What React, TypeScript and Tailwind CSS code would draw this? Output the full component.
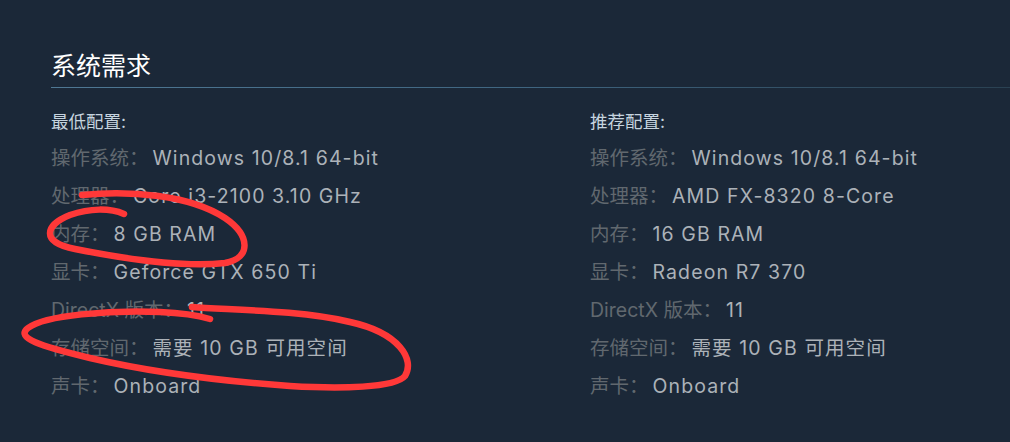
import React from 'react';

type Row = { label: string; value: string };

const minimum: Row[] = [
  { label: '操作系统：', value: 'Windows 10/8.1 64-bit' },
  { label: '处理器：', value: 'Core i3-2100 3.10 GHz' },
  { label: '内存：', value: '8 GB RAM' },
  { label: '显卡：', value: 'Geforce GTX 650 Ti' },
  { label: 'DirectX 版本：', value: '11' },
  { label: '存储空间：', value: '需要 10 GB 可用空间' },
  { label: '声卡：', value: 'Onboard' },
];

const recommended: Row[] = [
  { label: '操作系统：', value: 'Windows 10/8.1 64-bit' },
  { label: '处理器：', value: 'AMD FX-8320 8-Core' },
  { label: '内存：', value: '16 GB RAM' },
  { label: '显卡：', value: 'Radeon R7 370' },
  { label: 'DirectX 版本：', value: '11' },
  { label: '存储空间：', value: '需要 10 GB 可用空间' },
  { label: '声卡：', value: 'Onboard' },
];

const font = "font-['Inter','Noto_Sans_CJK_SC',sans-serif]";

const Column = ({ title, rows }: { title: string; rows: Row[] }) => (
  <div className="flex flex-col">
    <p className="text-[17.5px] leading-[22px] text-[#c6d4df]">{title}</p>
    <ul className="mt-[6px] flex flex-col">
      {rows.map((r) => (
        <li key={r.label} className="text-[19.5px] leading-[38px] whitespace-nowrap">
          <span className="text-[#61686f]">{r.label}</span>
          <span className="ml-[4px] text-[#acb2b8] tracking-[1.1px]">{r.value}</span>
        </li>
      ))}
    </ul>
  </div>
);

export default function App() {
  return (
    <div className={`relative w-[1010px] h-[442px] overflow-hidden bg-[#1b2838] ${font}`}>
      <div className="pl-[51px] pt-[50px]">
        <h2 className="text-[25px] leading-[32px] text-white">系统需求</h2>
        <div className="mt-[5px] h-px bg-gradient-to-r from-[#4f7894] via-[#3f6580] to-[#2a4152]" />
        <div className="mt-[23px] grid grid-cols-[539px_1fr]">
          <Column title="最低配置:" rows={minimum} />
          <Column title="推荐配置:" rows={recommended} />
        </div>
      </div>

      {/* red hand-drawn annotations */}
      <svg className="absolute inset-0 pointer-events-none" width="1010" height="442" viewBox="0 0 1010 442" fill="none">
        <path
          d="M82 195 C130 190 190 195 225 218 C250 235 252 258 225 263 C180 268 120 258 75 249 C40 242 45 225 70 215 C90 208 110 208 124 214"
          stroke="#ff3838"
          strokeWidth="6.5"
          strokeLinecap="round"
          strokeLinejoin="round"
        />
        <path
          d="M192 307 C230 310 300 310 350 322 C400 333 415 360 405 376 C395 388 340 389 290 386 C220 381 150 372 90 358 C40 346 15 338 28 328 C45 315 110 310 160 312 C185 313 200 316 210 319"
          stroke="#ff3838"
          strokeWidth="6.5"
          strokeLinecap="round"
          strokeLinejoin="round"
        />
      </svg>
    </div>
  );
}
